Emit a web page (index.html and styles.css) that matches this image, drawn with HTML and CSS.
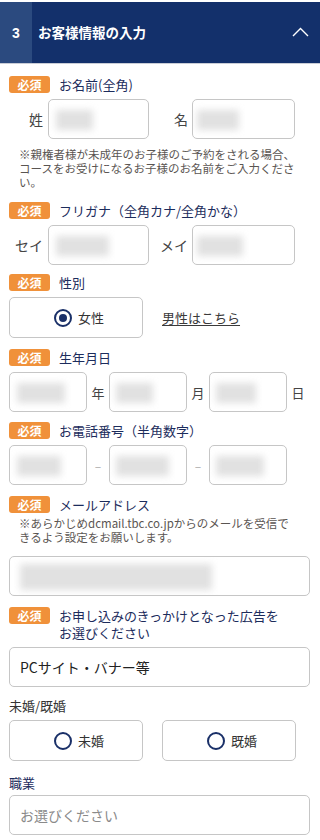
FILE: index.html
```html
<!DOCTYPE html>
<html lang="ja">
<head>
<meta charset="utf-8">
<title>お客様情報の入力</title>
<link rel="stylesheet" href="styles.css">
</head>
<body>
<header class="step-head">
  <span class="step-num">3</span>
  <h2 class="step-title">お客様情報の入力</h2>
  <svg class="chev" viewBox="0 0 17 10" aria-hidden="true"><polyline points="1,9 8.5,1.5 16,9" fill="none" stroke="#fff" stroke-width="1.4"/></svg>
</header>

<form class="form">
  <div class="field f1">
    <div class="head"><span class="req">必須</span><span class="label">お名前(全角)</span></div>
    <div class="pair-row">
      <div class="pair p-left"><span class="pre">姓</span><div class="box"><span class="blur" style="width:37px"></span></div></div>
      <div class="pair p-right"><span class="pre">名</span><div class="box"><span class="blur b-r" style="width:42px"></span></div></div>
    </div>
    <p class="note n1">※親権者様が未成年のお子様のご予約をされる場合、<br>コースをお受けになるお子様のお名前をご入力くださ<br>い。</p>
  </div>

  <div class="field f2">
    <div class="head"><span class="req">必須</span><span class="label">フリガナ（全角カナ/全角かな）</span></div>
    <div class="pair-row">
      <div class="pair p-left"><span class="pre">セイ</span><div class="box"><span class="blur" style="width:53px"></span></div></div>
      <div class="pair p-right"><span class="pre">メイ</span><div class="box"><span class="blur b-r" style="width:46px"></span></div></div>
    </div>
  </div>

  <div class="field f3">
    <div class="head"><span class="req">必須</span><span class="label">性別</span></div>
    <div class="radio-row">
      <label class="radio"><span class="dot checked"></span>女性</label>
      <a class="link" href="#">男性はこちら</a>
    </div>
  </div>

  <div class="field f4">
    <div class="head"><span class="req">必須</span><span class="label">生年月日</span></div>
    <div class="tri-row">
      <div class="box sm"><span class="blur" style="width:48px"></span></div><span class="suf">年</span>
      <div class="box sm"><span class="blur b-s" style="width:37px"></span></div><span class="suf">月</span>
      <div class="box sm"><span class="blur b-s" style="width:40px"></span></div><span class="suf">日</span>
    </div>
  </div>

  <div class="field f5">
    <div class="head"><span class="req">必須</span><span class="label">お電話番号（半角数字）</span></div>
    <div class="tri-row">
      <div class="box sm"><span class="blur" style="width:44px"></span></div><span class="suf dash">–</span>
      <div class="box sm"><span class="blur b-s" style="width:53px"></span></div><span class="suf dash">–</span>
      <div class="box sm"><span class="blur b-s" style="width:48px"></span></div>
    </div>
  </div>

  <div class="field f6">
    <div class="head"><span class="req">必須</span><span class="label">メールアドレス</span></div>
    <p class="note n2">※あらかじめdcmail.tbc.co.jpからのメールを受信で<br>きるよう設定をお願いします。</p>
    <div class="box wide mail"><span class="blur" style="width:192px"></span></div>
  </div>

  <div class="field f7">
    <div class="head"><span class="req">必須</span><span class="label">お申し込みのきっかけとなった広告を<br>お選びください</span></div>
    <div class="box wide sel">PCサイト・バナー等</div>
  </div>

  <div class="field f8">
    <div class="plain-label gray">未婚/既婚</div>
    <div class="radio-row two">
      <label class="radio"><span class="dot"></span>未婚</label>
      <label class="radio"><span class="dot"></span>既婚</label>
    </div>
  </div>

  <div class="field f9">
    <div class="plain-label">職業</div>
    <div class="box wide sel ph">お選びください</div>
  </div>
</form>
</body>
</html>
```

FILE: styles.css
```css
* { box-sizing: border-box; }

body {
  margin: 0;
  width: 320px;
  background: #fff;
  color: #333;
  font-family: "Noto Sans CJK JP", "Noto Sans", sans-serif;
}

/* header */
.step-head {
  margin-top: 2px;
  height: 62px;
  display: flex;
  align-items: center;
  background: #13306b;
  border-bottom: 1px solid #c9cdd6;
  color: #fff;
}
.step-num {
  width: 32px;
  align-self: stretch;
  display: flex;
  align-items: center;
  justify-content: center;
  background: #2b4a7f;
  font: bold 14px/1 "Liberation Sans", sans-serif;
}
.step-title {
  flex: 1;
  margin: 0 0 0 6px;
  font-size: 13.5px;
  font-weight: bold;
  line-height: 1;
}
.chev {
  width: 17px;
  height: 10px;
  margin: 0 11px 2px 0;
}

/* form */
.form { padding: 0 10px 0 9px; }

.f1 { margin-top: 12px; }
.f2 { margin-top: 13px; }
.f3 { margin-top: 9px; }
.f4 { margin-top: 11px; }
.f5 { margin-top: 10px; }
.f6 { margin-top: 11px; }
.f7 { margin-top: 11px; }
.f8 { margin-top: 10px; }
.f9 { margin-top: 13px; }

.head {
  display: flex;
  align-items: flex-start;
}
.req {
  flex: none;
  width: 41px;
  height: 17px;
  border-radius: 3px;
  background: #f0913a;
  color: #fff;
  font-size: 12px;
  font-weight: bold;
  line-height: 17px;
  text-align: center;
}
.label {
  margin-left: 9px;
  color: #1c2c5c;
  font-size: 13px;
  line-height: 17px;
}
.plain-label {
  color: #1c2c5c;
  font-size: 13px;
  line-height: 17px;
}
.plain-label.gray { color: #333; }

.box {
  position: relative;
  height: 40px;
  border: 1px solid #c6c6c6;
  border-radius: 5px;
  background: #fff;
  overflow: hidden;
}
.blur {
  position: absolute;
  left: 7px;
  top: 10px;
  height: 20px;
  background: #e1e1e1;
  filter: blur(3.5px);
}
.blur.b-r { left: 4px; }
.blur.b-s { left: 6px; }

/* name pairs */
.pair-row {
  margin-top: 6px;
  display: flex;
}
.pair { display: flex; align-items: center; }
.pre {
  padding-right: 5px;
  text-align: right;
  color: #444;
  font-size: 14px;
  line-height: 1;
}
.p-left .pre { width: 39px; }
.p-left .box { width: 101px; }
.p-right { margin-left: 11px; }
.p-right .pre { width: 32px; padding-right: 4px; }
.p-right .box { width: 103px; }

.note {
  margin: 0;
  padding-left: 10px;
  color: #5a5552;
  font-size: 11.5px;
  line-height: 14px;
}
.note.n1 { margin-top: 8px; }
.note.n2 { margin-top: 3px; }

/* radios */
.radio-row {
  margin-top: 6px;
  display: flex;
  align-items: center;
  gap: 19px;
}
.radio {
  width: 134px;
  height: 41px;
  padding-left: 6px;
  display: flex;
  align-items: center;
  justify-content: center;
  gap: 6px;
  border: 1px solid #c6c6c6;
  border-radius: 5px;
  color: #333;
  font-size: 13px;
}
.dot {
  width: 18px;
  height: 18px;
  border: 2.5px solid #1a3068;
  border-radius: 50%;
  display: flex;
  align-items: center;
  justify-content: center;
}
.dot.checked::after {
  content: "";
  width: 8px;
  height: 8px;
  border-radius: 50%;
  background: #1a3068;
}
.link {
  color: #3a3a3a;
  font-size: 13px;
  text-decoration: underline;
  text-underline-offset: 2px;
}

/* date / phone */
.tri-row {
  margin-top: 6px;
  display: flex;
  align-items: center;
}
.box.sm { width: 78px; }
.suf {
  width: 22px;
  text-align: center;
  color: #444;
  font-size: 13px;
}
.suf.dash { color: #aaa; font-size: 12px; }

/* wide inputs */
.box.wide { width: 301px; }
.box.mail { margin-top: 12px; }
.box.mail .blur { left: 10px; top: 7px; height: 26px; }
.sel {
  margin-top: 6px;
  display: flex;
  align-items: center;
  padding-left: 10px;
  color: #222;
  font-size: 14px;
}
.f9 .sel { margin-top: 4px; }
.sel.ph { color: #8a8a8a; }
```
